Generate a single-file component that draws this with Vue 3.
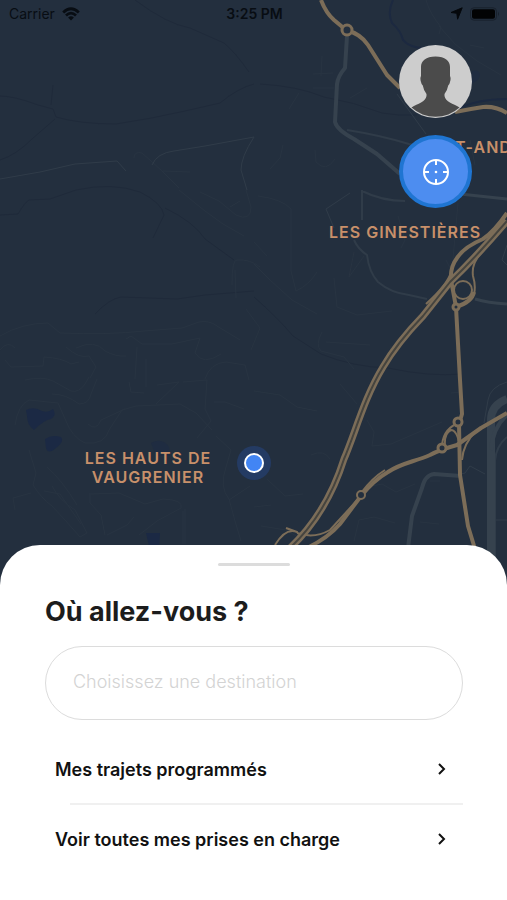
<script setup>
import { ref } from 'vue'

const destination = ref('')
const links = ['Mes trajets programmés', 'Voir toutes mes prises en charge']
</script>

<template>
  <main class="screen">
    <svg class="map" viewBox="0 0 507 600" preserveAspectRatio="xMidYMin slice" role="img" aria-label="Carte">
      <g class="water">
        <path d="M26 410 Q34 406 42 411 Q48 413 53 409 Q57 415 51 419 Q44 420 34 430 Q27 425 27 416Z" />
        <path d="M45 439 Q52 434 61 437 Q65 441 56 448 Q48 455 46 448Z" />
        <path class="faint" d="M151 443 Q162 437 169 447 L170 456 L156 456Z" />
        <path d="M146 533 L160 533 L159 550 L149 546Z" />
        <path class="faint" d="M472 71 Q480 69 480 76 Q478 82 470 84Z" />
      </g>
      <g class="stream">
        <path d="M0 96 Q14 96 38 105 L53 109 L56 117 Q80 124 116 124 Q150 119 185 111 L220 103 Q238 88 254 84" />
        <path d="M53 85 L51 105 M55 119 L32 139 Q16 155 0 160" />
        <path d="M135 0 Q167 24 190 28 L224 43 Q235 52 249 72" />
        <path d="M0 215 L18 214 Q25 202 29 200 L50 199 L76 190 Q112 182 140 192 Q162 203 164 215 L153 238 M165 208 Q194 222 205 239 L234 260" />
        <path d="M95 314 Q109 299 121 297 L177 299 L205 295 L254 291" />
        <path d="M260 84 Q297 86 324 97 Q354 102 382 113 Q398 116 417 115" />
        <path d="M254 297 Q278 318 293 336 L321 354 Q353 367 388 368 Q430 377 462 374" />
        <path class="river" d="M393 0 Q387 12 392 23 Q401 31 403 40 Q410 48 424 48 M458 109 Q477 99 507 99" />
      </g>
      <g class="lanes">
        <path d="M134 158 Q134 151 142 153 L151 161 L162 171 L179 188 M163 171 L190 172" />
        <path d="M179 190 L205 211 L223 224 L244 236 M200 192 L219 201 L236 215 Q251 222 251 207 L246 190 M230 207 L240 201" />
        <path d="M0 336 Q22 323 48 323 L60 333 Q108 335 144 331 L182 328 L199 322 Q209 320 217 326 L240 340 M232 285 Q232 259 237 260 Q250 259 260 267 M235 270 L236 298 M246 309 L260 328 L251 350" />
        <path d="M0 350 Q8 340 15 348 M5 360 L11 367 L43 366 L44 357 Q62 358 71 364 L79 362 M66 347 Q79 359 89 356 L96 367 L90 378 M76 348 Q95 339 105 351 Q116 357 126 356 M126 339 L131 336 L142 344 L172 344 L200 338 L195 353 Q203 366 221 354 M137 347 L135 379 M146 359 V387 M205 379 Q210 363 226 362 L245 365 L249 380" />
        <path d="M25 380 Q43 376 53 381 L71 391 Q79 393 85 384 L89 377 M52 394 Q66 394 79 404 Q89 404 91 394 L97 379 M15 425 Q18 405 29 400 L58 403 L66 421 Q72 437 85 443 Q105 445 109 430 L122 410 L136 406 L180 404 L196 413 L212 430 M88 424 Q96 432 101 420 L125 409 M129 382 L131 392 L144 393 M156 404 L179 382 L157 385 M183 382 L207 380 L205 409 L211 421 L197 438 M214 402 L225 402 L244 409" />
        <path d="M29 450 L36 473 L33 485 Q41 498 52 506 L65 520 L80 537 L87 533 L75 510 Q59 500 52 486 M44 491 L60 494 L81 524 M47 467 Q62 480 77 505 M15 510 L13 498 L31 493 M90 493 L90 503 L101 515 L105 535 M91 494 L119 493 L145 504 L163 499 Q184 500 181 508 L157 521 L139 535 M183 511 V544 M185 509 V544 M134 517 L127 525 L107 535 M216 436 L231 450 L226 467 Q219 487 229 499 L235 521 L241 541 M229 500 L250 486" />
        <path d="M258 196 Q282 199 291 209 L291 271 L296 291 Q309 285 317 272 M254 242 L267 256 M254 264 L270 280 L292 300 L317 314 M322 332 Q315 345 321 351 L344 357 L354 369 M326 342 L370 345 M334 278 L337 307 L357 315 L392 311 M354 252 L349 277 L364 256 M398 216 L405 240 L401 248 M391 346 L389 361" />
        <path d="M254 391 L280 395 L297 407 L317 411 M340 384 L357 404 M367 420 L374 432 L372 446 L391 444 L442 422 M311 455 Q324 449 330 459 M267 479 L285 496 L303 494 M254 507 L271 505 M367 487 L382 484 L396 492 L415 484 M261 526 L286 530 L305 541 M354 541 L359 520 L374 517 L395 523 M420 522 L439 524 M430 481 L440 481" />
        <path d="M322 56 L321 76 M313 74 L333 73 M313 88 L334 88 M350 98 L367 88 M299 93 L289 109 M315 150 L316 162 Q326 173 335 159 M283 145 L280 158 L270 169 M426 0 Q430 14 441 27 L439 34 M439 26 L455 44 L477 61 L501 75 M470 45 L484 48" />
        <path d="M458 203 L453 259 M446 260 L451 270 M470 140 L475 165 M461 392 L451 393" />
      </g>
      <g class="paths">
        <path d="M0 179 L40 172 L75 164 L117 161 L126 171 M152 165 Q157 153 174 151 L205 146 L254 137 Q241 157 241 170 L247 190" />
        <path d="M326 209 L334 228 M326 209 L350 193 M397 94 L426 134" />
        <path d="M507 382 Q490 387 488 400 L484 423 M493 520 H507" />
        <path d="M457 475 L465 473 L470 466 L485 474 M507 245 L502 260 L507 265" />
      </g>
      <g class="streets">
        <path d="M347 130 Q379 135 409 144 L425 145" />
        <path d="M362 190 V220 M354 240 Q358 249 367 255 Q369 272 378 282 Q391 293 409 295 L427 299 M362 191 Q382 201 405 201" />
        <path d="M507 437 Q496 446 495 461 V560" />
      </g>
      <g class="avenues">
        <path d="M347 36 L345 68 Q338 76 337 84 L335 122 Q337 130 354 139 L377 154 L400 174" />
        <path d="M460 194 L507 199 M475 299 Q488 303 507 304" class="thin" />
        <path d="M461 476 L434 474 Q425 475 422 488 L412 516 L408 548" />
        <path class="wide" d="M507 399 Q491 405 491 420 V560" />
        <path d="M507 415 Q493 427 491 450" />
      </g>
      <g class="roads">
        <path d="M321 0 Q326 13 334 20 L346 30 Q361 34 368 45 L387 75 L400 88" />
        <path d="M455 112 Q470 109 483 107 Q496 106 507 113" />
        <path d="M507 213 Q494 232 483 239 Q464 247 457 258 Q450 267 451 280 L456 307" />
        <path d="M474 292 Q472 302 456 307 L460 380 L462 414 L459 424 L460 475 L468 526 L475 549" />
        <path d="M507 413 L481 428 L457 445 Q439 450 430 455 C414 462 401 463 388 472 Q374 480 361 496 L340 524 Q328 538 307 548" />
        <path class="ramp" d="M484 250 Q471 262 473 276 Q476 286 474 294 M361 493 Q372 478 385 470 M451 272 Q448 284 426 304" />
        <path class="ramp" d="M442 448 Q442 431 456 424 M445 446 Q444 433 451 430 Q457 430 460 446 M476 431 Q463 444 462 460 M275 545 Q286 527 297 532 L286 528 M297 533 Q314 539 330 530 L361 496" />
      </g>
      <g class="motorway">
        <path class="band" d="M507 221 Q477 256 450 282 L423 316 Q397 343 383 367 C364 398 355 434 344 459 Q327 513 290 548" />
        <path class="gap" d="M507 221 Q477 256 450 282 L423 316 Q397 343 383 367 C364 398 355 434 344 459 Q327 513 290 548" />
      </g>
      <g class="rings">
        <circle cx="347" cy="30" r="5" />
        <circle class="loop" cx="463" cy="290" r="9" />
        <circle cx="456" cy="307" r="3" />
        <circle cx="458" cy="422" r="4" />
        <circle cx="442" cy="448" r="4" />
        <circle class="loop" cx="361" cy="495" r="4" />
      </g>
      <g class="labels">
        <text x="455" y="153">T-AND</text>
        <text x="329" y="238">LES GINESTIÈRES</text>
        <text x="148" y="464" text-anchor="middle">LES HAUTS DE</text>
        <text x="148" y="483" text-anchor="middle">VAUGRENIER</text>
      </g>
      <circle class="halo" cx="254" cy="463" r="17" />
      <circle class="position" cx="254" cy="463" r="9" />
    </svg>

    <header class="status">
      <div class="network">
        <span>Carrier</span>
        <svg width="18" height="14" viewBox="0 0 18 14" aria-hidden="true">
          <g fill="none" stroke="#080d13" stroke-width="2.8">
            <path d="M1.200 5.400Q9-2 16.800 5.400" />
            <path d="M4 8.500Q9 3.800 14 8.500" />
          </g>
          <path d="M6.100 10.500Q9 7.800 11.900 10.500L9 13.500Z" fill="#080d13" />
        </svg>
      </div>
      <time class="clock">3:25 PM</time>
      <div class="power">
        <svg width="13" height="13" viewBox="0 0 13 13" aria-hidden="true"><path d="M12.200.8 7.600 12.200 6.800 6.300 1 5.500Z" fill="#05080c" stroke="#05080c" stroke-linejoin="round" /></svg>
        <svg width="30" height="14" viewBox="0 0 30 14" aria-hidden="true">
          <rect x=".5" y=".8" width="26" height="12.400" rx="3.500" fill="none" stroke="#19222d" />
          <rect x="2" y="2.300" width="23" height="9.400" rx="2" fill="#020304" />
          <path d="M28 4.800Q30 7 28 9.200Z" fill="#19222d" />
        </svg>
      </div>
    </header>

    <nav class="tools" aria-label="Outils de la carte">
      <button class="round avatar" type="button" aria-label="Profil">
        <svg viewBox="0 0 73 73" aria-hidden="true">
          <circle cx="36.500" cy="36.500" r="36.500" fill="#cdcdcd" />
          <path d="M36.500 11.500C27 11.500 22 16 22 22V31Q20.800 33 22 37Q22.600 40 23.800 40.500Q24.500 45 27.500 49V51C26.500 57 19 58.500 12.500 62.500A35.500 35.500 0 0 0 60.500 62.500C54 58.500 46.500 57 45.500 51V49Q48.500 45 49.200 40.500Q50.400 40 51 37Q52.200 33 51 31V22C51 16 46 11.500 36.500 11.500Z" fill="#4b4b4b" />
        </svg>
      </button>
      <button class="round locate" type="button" aria-label="Me localiser">
        <svg width="28" height="28" viewBox="0 0 28 28" fill="none" stroke="#fff" stroke-width="2" aria-hidden="true">
          <circle cx="14" cy="14" r="12" />
          <path d="M14 2v5M14 21v5M2 14h5M21 14h5" />
          <circle cx="14" cy="14" r="1.300" fill="#fff" stroke="none" />
        </svg>
      </button>
    </nav>

    <section class="sheet">
      <div class="handle"></div>
      <h1><label for="destination">Où allez-vous ?</label></h1>
      <input id="destination" v-model="destination" type="text" placeholder="Choisissez une destination" />
      <ul class="links">
        <li v-for="link in links" :key="link">
          <a href="#">
            <span>{{ link }}</span>
            <svg width="10" height="14" viewBox="0 0 10 14" fill="none" stroke="#111" stroke-width="2" aria-hidden="true"><path d="M2 2l5 5-5 5" /></svg>
          </a>
        </li>
      </ul>
    </section>
  </main>
</template>

<style>
body {
  margin: 0;
  background: #232f3e;
}
</style>

<style scoped>
.screen {
  position: relative;
  display: flex;
  flex-direction: column;
  min-height: 100vh;
  overflow: hidden;
  background: #232f3e;
  font-family: Inter, "Liberation Sans", sans-serif;
}
.map {
  position: absolute;
  top: 0;
  left: 0;
  width: 100%;
}
.map path {
  fill: none;
  stroke-linejoin: round;
}
.map .water path { fill: #1b2944; }
.map .water .faint { fill: #1f2c41; }
.stream { stroke: #1f2a3a; stroke-width: 1; }
.stream .river { stroke: #1c2940; stroke-width: 2; }
.lanes { stroke: #283442; stroke-width: 1; }
.paths { stroke: #303c49; stroke-width: 1; }
.streets { stroke: #303c49; stroke-width: 2; }
.avenues { stroke: #36424e; stroke-width: 4; }
.avenues .thin { stroke-width: 3; }
.avenues .wide { stroke-width: 8; }
.roads { stroke: #7c6d58; stroke-width: 4; }
.roads .ramp { stroke-width: 2; }
.motorway .band { stroke: #7c6d58; stroke-width: 7; }
.motorway .gap { stroke: #45443f; stroke-width: 2; }
.rings { fill: #232f3e; stroke: #7c6d58; stroke-width: 3; }
.rings .loop { stroke-width: 2; }
.labels {
  fill: #c8906a;
  font-size: 16px;
  font-weight: 600;
  letter-spacing: 1px;
}
.halo { fill: #243b63; }
.position { fill: #4285f4; stroke: #fff; stroke-width: 2; }
.status {
  position: relative;
  display: grid;
  grid-template-columns: 1fr auto 1fr;
  align-items: center;
  height: 27px;
  padding: 0 7px 0 9px;
  color: #080d13;
  font-size: 14px;
}
.network, .power {
  display: flex;
  align-items: center;
  gap: 7px;
}
.power { justify-content: flex-end; }
.clock { font-weight: 600; }
.tools {
  position: relative;
  display: flex;
  flex-direction: column;
  align-items: flex-end;
  gap: 17px;
  padding: 18px 35px 24px;
}
.round {
  display: flex;
  align-items: center;
  justify-content: center;
  box-sizing: border-box;
  width: 73px;
  height: 73px;
  padding: 0;
  border: 0;
  border-radius: 50%;
  background: none;
  cursor: pointer;
}
.locate {
  border: 4px solid #1f75d2;
  background: #4d8df0;
}
.sheet {
  position: relative;
  display: flex;
  flex-direction: column;
  margin-top: auto;
  padding: 18px 44px 27px 45px;
  border-radius: 40px 40px 0 0;
  background: #fff;
}
.handle {
  align-self: center;
  width: 72px;
  height: 3px;
  border-radius: 2px;
  background: #dcdcdc;
}
h1 {
  margin: 28px 0 16px;
  color: #1c1c1c;
  font-size: 27px;
  font-weight: 700;
  line-height: 36px;
}
input {
  box-sizing: border-box;
  width: 100%;
  height: 74px;
  padding: 0 27px 3px;
  border: 1px solid #dcdcdc;
  border-radius: 37px;
  background: #fff;
  color: #1c1c1c;
  font: 300 18px Inter, "Liberation Sans", sans-serif;
}
input::placeholder {
  color: #d3d3d3;
  opacity: 1;
}
.links {
  margin: 15px 0 0;
  padding: 0;
  list-style: none;
}
li + li::before {
  display: block;
  height: 2px;
  margin-left: 25px;
  background: #f0f0f0;
  content: "";
}
a {
  display: flex;
  align-items: center;
  justify-content: space-between;
  height: 68px;
  padding: 0 16px 0 10px;
  color: #111;
  font-size: 18px;
  font-weight: 600;
  text-decoration: none;
}
</style>
